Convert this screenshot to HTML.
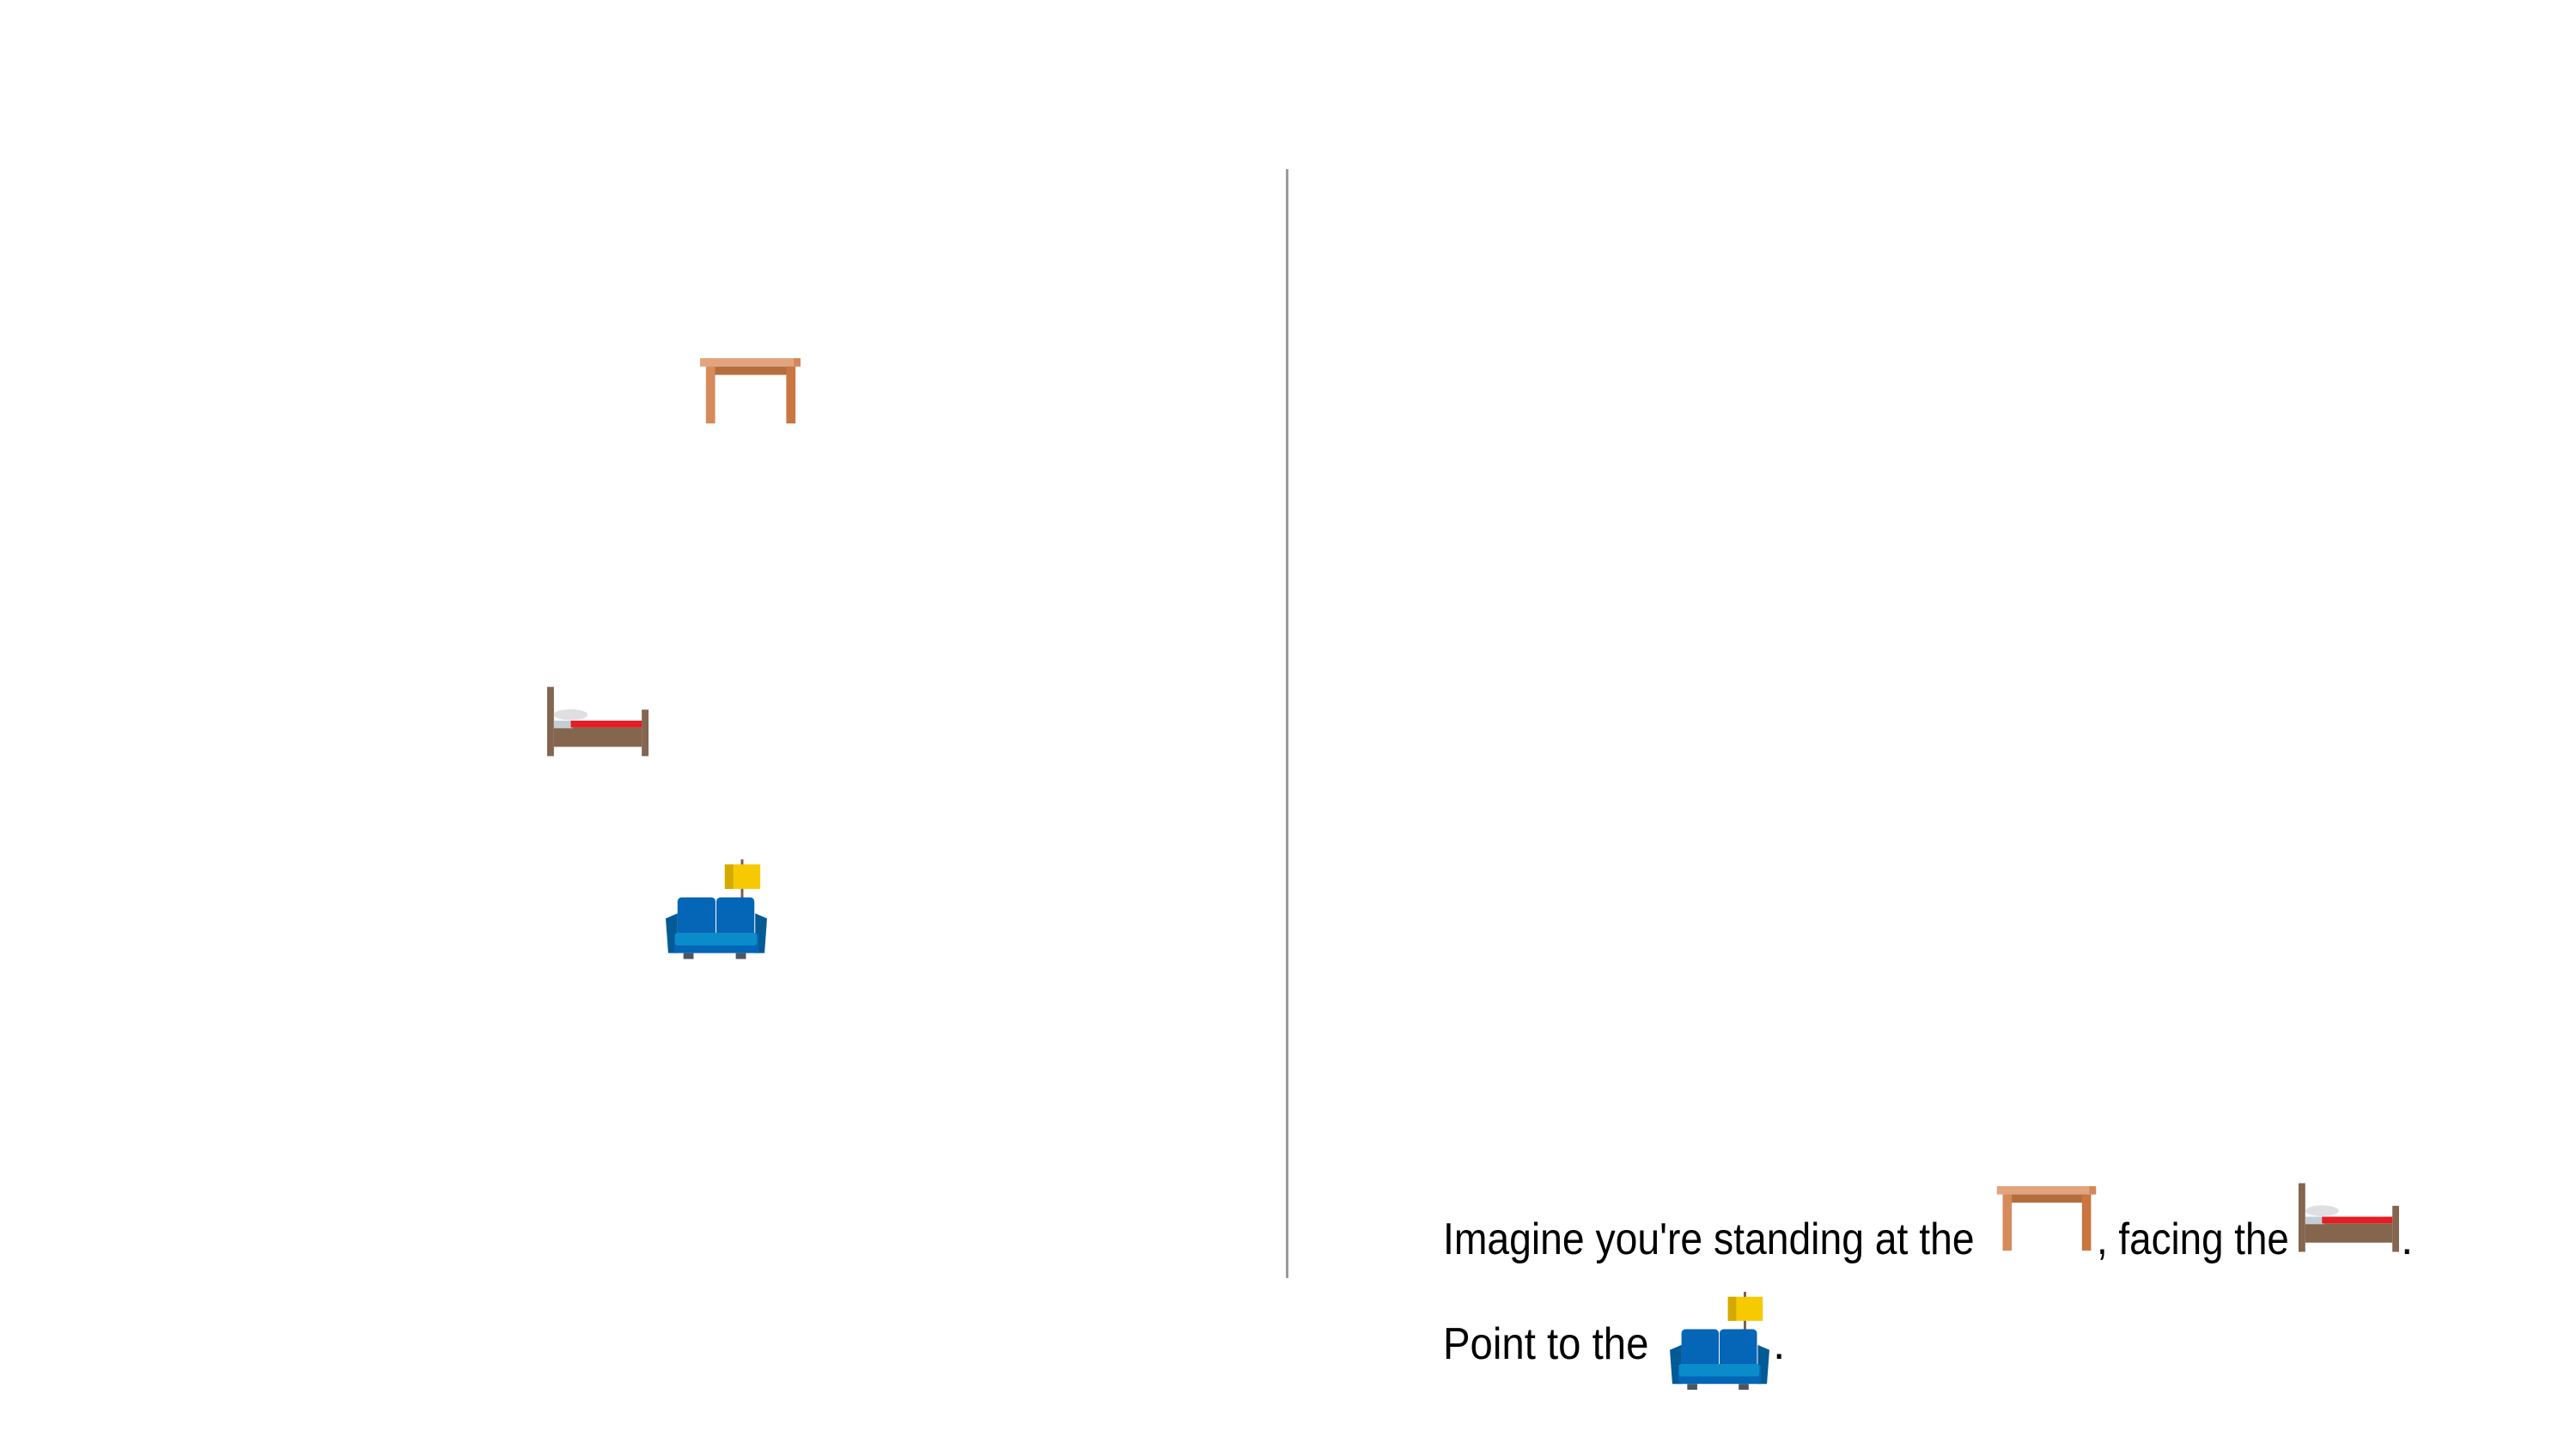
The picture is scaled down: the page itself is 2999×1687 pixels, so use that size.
<!DOCTYPE html>
<html><head><meta charset="utf-8"><style>
html,body{margin:0;padding:0;background:#fff;}
body{width:2999px;height:1687px;position:relative;overflow:hidden;font-family:"Liberation Sans",sans-serif;}
.a{position:absolute;}
.t{position:absolute;font-size:52px;line-height:1;color:#000;white-space:nowrap;transform-origin:0 0;}
</style></head><body>
<div class="a" style="left:1497px;top:197px;width:3px;height:1291px;background:#9a9a9a"></div>

<svg width="0" height="0" style="position:absolute">
<defs>
<symbol id="table" viewBox="0 0 120 78">
<rect x="0" y="0" width="120" height="10" fill="#e2a47f"/>
<rect x="112" y="0" width="8" height="10" fill="#d4875a"/>
<rect x="10" y="10" width="100" height="10" fill="#b36e3e"/>
<rect x="7" y="10" width="11" height="68" fill="#d68a5a"/>
<rect x="103" y="10" width="11" height="68" fill="#c97640"/>
</symbol>
<symbol id="bed" viewBox="0 0 120 82">
<rect x="0" y="0" width="8" height="82" fill="#84654f"/>
<rect x="112" y="27" width="8" height="55" fill="#84654f"/>
<rect x="8" y="48" width="104" height="23" fill="#84664f"/>
<rect x="8" y="40" width="22" height="9" fill="#c5ced4"/>
<rect x="28" y="40" width="84" height="8" fill="#e31e25"/>
<ellipse cx="28" cy="33" rx="20" ry="6.5" fill="#dfdfe3"/>
</symbol>
<symbol id="sofa" viewBox="0 0 120 118">
<rect x="89" y="0" width="3" height="50" fill="#7d5a4d"/>
<rect x="70" y="6" width="42" height="29" fill="#f7c900"/>
<rect x="70" y="6" width="10" height="29" fill="#d4aa00"/>
<rect x="14" y="45" width="45" height="50" rx="5" fill="#0565b6"/>
<rect x="60" y="45" width="45" height="50" rx="5" fill="#0565b6"/>
<path d="M0 70 L14 64 L14 111 L3 111 Z" fill="#035a94"/>
<path d="M120 70 L106 64 L106 111 L117 111 Z" fill="#035a94"/>
<rect x="10" y="88" width="100" height="23" fill="#0565b6"/>
<rect x="11" y="87" width="97" height="15" rx="3" fill="#0b8cca"/>
<rect x="21" y="111" width="12" height="7" fill="#4c5668"/>
<rect x="83" y="111" width="12" height="7" fill="#4c5668"/>
</symbol>
</defs></svg>

<svg class="a" style="left:815px;top:417px" width="117" height="76"><use href="#table"/></svg>
<svg class="a" style="left:637px;top:799px" width="118" height="82"><use href="#bed"/></svg>
<svg class="a" style="left:775px;top:1000px" width="118" height="117"><use href="#sofa"/></svg>

<div class="t" style="left:1680px;top:1417px;transform:scaleX(0.89)">Imagine you're standing at the</div>
<svg class="a" style="left:2324px;top:1381px" width="117" height="75"><use href="#table"/></svg>
<div class="t" style="left:2441px;top:1417px;transform:scaleX(0.88)">, facing the</div>
<svg class="a" style="left:2676px;top:1377px" width="117" height="81"><use href="#bed"/></svg>
<div class="t" style="left:2795px;top:1417px">.</div>

<div class="t" style="left:1680px;top:1539px;transform:scaleX(0.91)">Point to the</div>
<svg class="a" style="left:1944px;top:1504px" width="116" height="114"><use href="#sofa"/></svg>
<div class="t" style="left:2064px;top:1539px">.</div>
</body></html>
